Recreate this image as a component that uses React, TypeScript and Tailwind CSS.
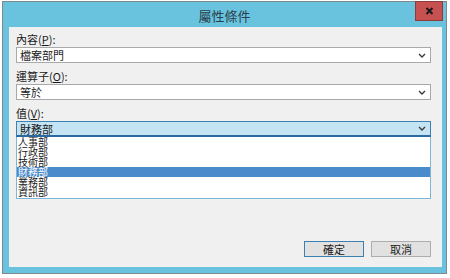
import React from "react";

const font = { fontFamily: '"Noto Sans CJK TC", "Noto Sans", sans-serif' };

function Chevron() {
  return (
    <svg width="8" height="5" viewBox="0 0 8 5" className="shrink-0">
      <path d="M1 1 L4 4 L7 1" fill="none" stroke="#3a3a3a" strokeWidth="1.4" />
    </svg>
  );
}

function Label({ text, hot }: { text: string; hot: string }) {
  return (
    <div className="h-[12px] flex items-center text-[11px] leading-[12px] text-[#1a1a1a]">
      {text}(<span className="underline">{hot}</span>):
    </div>
  );
}

function Combo({ value }: { value: string }) {
  return (
    <div className="mt-[2px] h-[16px] border border-[#a9a9a9] bg-white flex items-center pl-[3px] pr-[4px] text-[11px] leading-[14px] text-[#1a1a1a]">
      <span className="flex-1">{value}</span>
      <Chevron />
    </div>
  );
}

export default function App() {
  const items = ["人事部", "行政部", "技術部", "財務部", "業務部", "資訊部"];
  return (
    <div className="w-[450px] h-[278px] bg-white" style={font}>
      <div className="ml-[2px] mt-[1px] w-[445px] h-[273px] border border-[#7f8a90] bg-[#69c3df] flex flex-col">
        <div className="h-[25px] shrink-0 relative flex items-center justify-center">
          <span className="text-[13px] text-[#2a3f4a] mt-[2px]">屬性條件</span>
          <div className="absolute right-[3px] top-[-1px] w-[28px] h-[20px] bg-[#c75050] border border-[#8f3b3b] flex items-center justify-center">
            <svg width="9" height="8" viewBox="0 0 9 8">
              <path d="M1.5 1 L7.5 7 M7.5 1 L1.5 7" stroke="#1a1a1a" strokeWidth="2" />
            </svg>
          </div>
        </div>
        <div className="flex-1 ml-[6px] mr-[4px] mb-[6px] bg-[#f0f0f0] flex flex-col pl-[7px] pr-[11px] pt-[6px]">
          <Label text="內容" hot="P" />
          <Combo value="檔案部門" />
          <div className="h-[7px]" />
          <Label text="運算子" hot="O" />
          <Combo value="等於" />
          <div className="h-[7px]" />
          <Label text="值" hot="V" />
          <div className="mt-[2px] h-[16px] border border-[#3c7fb1] border-b-[2px] border-b-[#2a6aa0] bg-[#c4e3f3] flex items-center pl-[3px] pr-[4px] text-[11px] leading-[14px] text-[#1a1a1a]">
            <span className="flex-1">財務部</span>
            <Chevron />
          </div>
          <div className="h-[62px] border border-[#7eb6d8] border-t-0 bg-white flex flex-col">
            {items.map((it) => (
              <div
                key={it}
                className={
                  "h-[10px] leading-[10px] text-[10px] pl-[1px] " +
                  (it === "財務部" ? "bg-[#4a8bcb] text-white" : "text-[#1a1a1a]")
                }
              >
                {it}
              </div>
            ))}
          </div>
          <div className="flex-1" />
          <div className="flex justify-end gap-[7px] mb-[10px]">
            <button className="w-[60px] h-[16px] border border-[#3c7fb1] bg-[#e1e1e1] text-[11px] leading-[14px] text-[#1a1a1a]">
              確定
            </button>
            <button className="w-[60px] h-[16px] border border-[#adadad] bg-[#e1e1e1] text-[11px] leading-[14px] text-[#1a1a1a]">
              取消
            </button>
          </div>
        </div>
      </div>
    </div>
  );
}
